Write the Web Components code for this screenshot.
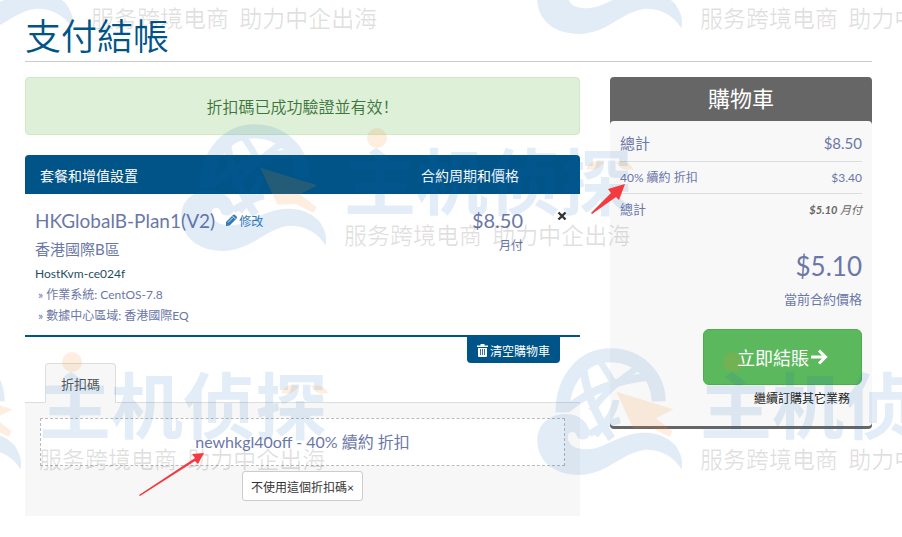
<!DOCTYPE html>
<html lang="zh-Hant">
<head>
<meta charset="utf-8">
<meta name="viewport" content="width=device-width, initial-scale=1">
<title>支付結帳</title>
<style>
  body {
    margin: 0;
    background: #fff;
    color: #6b77a8;
    font-family: "Lato", "Noto Sans CJK TC", sans-serif;
    font-size: 12px;
  }
</style>
</head>
<body>
<checkout-page>
  <page-title>支付結帳</page-title>
  <alert-box slot="main" lang="zh-Hans">折扣碼已成功驗證並有效！</alert-box>
  <cart-table slot="main"></cart-table>
  <discount-tabs slot="main" label="折扣碼">newhkgl40off - 40% 續約 折扣</discount-tabs>
  <order-summary slot="side"></order-summary>
</checkout-page>
<water-layer></water-layer>

<script>
class CheckoutPage extends HTMLElement {
  constructor() {
    super();
    this.attachShadow({ mode: 'open' });
  }

  connectedCallback() {
    this.shadowRoot.innerHTML = `
      <style>
        :host { display: block; padding: 14px 30px 20px 25px; }
        .cols {
          display: grid;
          grid-template-columns: minmax(0, 1fr) 262px;
          gap: 30px;
          align-items: start;
          margin-top: 15px;
        }
      </style>
      <slot></slot>
      <div class="cols">
        <main><slot name="main"></slot></main>
        <aside><slot name="side"></slot></aside>
      </div>
    `;
  }
}
customElements.define('checkout-page', CheckoutPage);

class PageTitle extends HTMLElement {
  constructor() {
    super();
    this.attachShadow({ mode: 'open' });
    this.shadowRoot.innerHTML = `
      <style>
        :host { display: block; border-bottom: 1px solid #ccc; }
        h1 {
          margin: 0;
          padding-bottom: 3px;
          font-size: 36px;
          font-weight: 350;
          line-height: 44px;
          color: #005487;
        }
      </style>
      <h1><slot></slot></h1>
    `;
  }
}
customElements.define('page-title', PageTitle);

class AlertBox extends HTMLElement {
  constructor() {
    super();
    this.attachShadow({ mode: 'open' });
    this.shadowRoot.innerHTML = `
      <style>
        :host {
          display: block;
          margin-bottom: 20px;
          padding: 16px;
          border: 1px solid #d0e9c6;
          border-radius: 4px;
          background: #dff0d8;
          color: #3c763d;
          font-family: "Noto Sans CJK SC", sans-serif;
          font-size: 16px;
          font-weight: 350;
          line-height: 24px;
          text-align: center;
        }
      </style>
      <div role="status"><slot></slot></div>
    `;
  }
}
customElements.define('alert-box', AlertBox);

class CartTable extends HTMLElement {
  constructor() {
    super();
    this.attachShadow({ mode: 'open' });
  }

  connectedCallback() {
    this.shadowRoot.innerHTML = `
      <style>
        :host { display: block; }
        table {
          width: 100%;
          table-layout: fixed;
          border-collapse: separate;
          border-spacing: 0;
          border-bottom: 2px solid #005487;
        }
        .price { width: 146px; }
        .remove { width: 37px; }
        th {
          padding: 0;
          height: 39px;
          background: #005487;
          color: #fff;
          font-size: 14px;
          font-weight: 400;
        }
        th:first-child { padding-left: 15px; text-align: left; border-top-left-radius: 4px; }
        th:last-child { border-top-right-radius: 4px; }
        td { padding: 12px 0 9px; vertical-align: top; }
        td:first-child { padding-left: 10px; }
        td.price { padding-right: 20px; box-sizing: border-box; text-align: right; }
        .name { display: flex; align-items: center; gap: 10px; height: 28px; font-size: 19px; }
        .amount { font-size: 20px; line-height: 28px; }
        .group { height: 30px; font-size: 15px; line-height: 30px; }
        .host { height: 20px; line-height: 20px; color: #1f4e5f; }
        ul { margin: 0; padding: 0 0 0 3px; list-style: none; line-height: 21px; }
        li { height: 21px; }
        .cycle { line-height: 24px; }
        a { display: flex; align-items: center; gap: 1px; color: #337ab7; font-size: 12px; text-decoration: none; }
        button { font: inherit; border: 0; cursor: pointer; }
        .x { display: block; margin: 4px auto 0; padding: 0; height: 12px; background: none; }
        .x svg { display: block; }
        .foot { display: flex; justify-content: flex-end; padding-right: 20px; }
        .clear {
          display: flex;
          align-items: center;
          gap: 2px;
          height: 26px;
          padding: 0 10px;
          border-radius: 0 0 4px 4px;
          background: #005487;
          color: #fff;
        }
      </style>
      <table>
        <thead>
          <tr>
            <th scope="col">套餐和增值設置</th>
            <th scope="col" class="price">合約周期和價格</th>
            <th class="remove"></th>
          </tr>
        </thead>
        <tbody>
          <tr>
            <td>
              <div class="name">
                <span>HKGlobalB-Plan1(V2)</span>
                <a href="#"><svg width="13" height="12" viewBox="0 0 13 12"><path fill="currentColor" d="M1 8l7-7q1-1 2 0l1.600 1.600q1 1 0 2l-7 6.800-3.600.6z"/><path d="M7.500 2l3 3M3 8.500l5-5" stroke="#fff" stroke-width=".8"/></svg>修改</a>
              </div>
              <div class="group">香港國際B區</div>
              <div class="host">HostKvm-ce024f</div>
              <ul>
                <li>» 作業系統: CentOS-7.8</li>
                <li>» 數據中心區域: 香港國際EQ</li>
              </ul>
            </td>
            <td class="price">
              <div class="amount">$8.50</div>
              <div class="cycle">月付</div>
            </td>
            <td>
              <button class="x" type="button" aria-label="×"><svg width="10" height="10" viewBox="0 0 10 10"><path d="M1.500 1.500l7 7m0-7l-7 7" stroke="#333" stroke-width="2.400"/></svg></button>
            </td>
          </tr>
        </tbody>
      </table>
      <div class="foot">
        <button class="clear" type="button">
          <svg width="11" height="13" viewBox="0 0 11 13"><path fill="#fff" fill-rule="evenodd" d="M3.500 0h4v1.500H11V3H0V1.500h3.500zM1 4h9v8q0 1-1 1H2q-1 0-1-1zM3 5v6h.8V5zm2.100 0v6h.8V5zm2.100 0v6H8V5z"/></svg>清空購物車
        </button>
      </div>
    `;
  }
}
customElements.define('cart-table', CartTable);

class DiscountTabs extends HTMLElement {
  constructor() {
    super();
    this.attachShadow({ mode: 'open' });
  }

  connectedCallback() {
    const label = this.getAttribute('label') || '';

    this.shadowRoot.innerHTML = `
      <style>
        :host { display: block; }
        .tabs { display: flex; padding-left: 20px; border-bottom: 1px solid #ddd; }
        button { font: inherit; cursor: pointer; }
        .tab {
          height: 40px;
          margin-bottom: -1px;
          padding: 0 15px;
          border: 1px solid #ddd;
          border-bottom-color: #f7f7f7;
          border-radius: 4px 4px 0 0;
          background: #f7f7f7;
          color: #555;
          font-size: 13px;
        }
        .panel {
          display: flex;
          flex-direction: column;
          align-items: center;
          gap: 5px;
          padding: 15px;
          background: #f7f7f7;
        }
        .code {
          box-sizing: border-box;
          width: 100%;
          border: 1px dashed #bbb;
          background: #fff;
          font-size: 16px;
          line-height: 46px;
          text-align: center;
        }
        .drop {
          height: 30px;
          padding: 0 8px;
          border: 1px solid #ccc;
          border-radius: 3px;
          background: #fff;
          color: #333;
        }
      </style>
      <div class="tabs" role="tablist">
        <button class="tab" type="button" role="tab" aria-selected="true">${label}</button>
      </div>
      <div class="panel" role="tabpanel">
        <div class="code"><slot></slot></div>
        <button class="drop" type="button">不使用這個折扣碼×</button>
      </div>
    `;
  }
}
customElements.define('discount-tabs', DiscountTabs);

class OrderSummary extends HTMLElement {
  constructor() {
    super();
    this.attachShadow({ mode: 'open' });
  }

  connectedCallback() {
    this.shadowRoot.innerHTML = `
      <style>
        :host {
          display: block;
          border-bottom: 3px solid #666;
          border-radius: 4px;
          background: #666;
        }
        h2 {
          margin: 0;
          color: #fff;
          font-size: 22px;
          font-weight: 400;
          line-height: 44px;
          text-align: center;
        }
        .body {
          display: flex;
          flex-direction: column;
          align-items: flex-end;
          padding: 4px 10px 13px;
          border-radius: 4px;
          background: #f8f8f8;
        }
        .row { display: flex; justify-content: space-between; align-self: stretch; font-size: 13px; line-height: 31px; }
        .first { font-size: 15px; line-height: 36px; }
        .off { font-size: 12px; }
        .line { border-bottom: 1px solid #ddd; }
        em { color: #666; font-size: 11px; }
        .total { margin-top: 20px; font-size: 26px; line-height: 42px; }
        .label { font-size: 13px; line-height: 24px; }
        button {
          display: flex;
          align-items: center;
          justify-content: center;
          gap: 2px;
          width: 159px;
          height: 56px;
          margin-top: 18px;
          border: 1px solid #4cae4c;
          border-radius: 6px;
          background: #5cb85c;
          color: #fff;
          font: inherit;
          font-size: 18px;
          cursor: pointer;
        }
        a { margin-right: 12px; color: #222; line-height: 28px; text-decoration: none; }
      </style>
      <h2>購物車</h2>
      <div class="body">
        <div class="row first line"><span>總計</span><span>$8.50</span></div>
        <div class="row off line"><span>40% 續約 折扣</span><span>$3.40</span></div>
        <div class="row"><span>總計</span><em><b>$5.10</b> 月付</em></div>
        <div class="total">$5.10</div>
        <div class="label">當前合約價格</div>
        <button type="button">立即結賬<svg width="17" height="16" viewBox="0 0 17 16"><path d="M0 8h14M8 1.500L14.500 8 8 14.500" fill="none" stroke="#fff" stroke-width="3"/></svg></button>
        <a href="#">繼續訂購其它業務</a>
      </div>
    `;
  }
}
customElements.define('order-summary', OrderSummary);

// one watermark: globe logo, brand name and slogan
class WaterMark extends HTMLElement {
  constructor() {
    super();
    this.attachShadow({ mode: 'open' });
    this.shadowRoot.innerHTML = `
      <style>
        :host {
          display: flex;
          gap: 18px;
          width: max-content;
          font-family: "Noto Sans CJK SC", sans-serif;
        }
        .logo { flex: none; }
        .brand { position: relative; padding-top: 14px; }
        .name { font-size: 72px; font-weight: 700; line-height: 80px; color: rgba(16, 105, 197, .12); }
        .slogan { font-size: 23px; line-height: 32px; color: rgba(0, 0, 0, .12); white-space: pre; }
        .spots { position: absolute; left: 0; top: 0; }
      </style>
      <svg class="logo" width="145" height="127" viewBox="21 24 435 381">
        <g opacity=".12" fill="none" stroke="#1069c5">
          <path stroke-width="42" d="M98 217C97 116 160 46 242 46C325 46 385 108 386 184"/>
          <path stroke-width="24" d="M158 74C168 160 200 232 245 296M112 206C170 158 250 122 352 110"/>
          <path stroke-width="20" d="M206 58C222 82 240 108 258 144M330 78C270 118 222 160 184 212M178 282C208 262 238 248 270 240M258 180C254 216 228 246 196 286"/>
          <path fill="#1069c5" stroke="none" d="M22 300C22 248 66 222 105 222C145 220 176 246 180 282C174 302 150 302 142 292C138 276 128 272 116 280C108 298 120 318 140 324C196 338 226 310 280 290C340 268 400 276 436 316C456 344 460 370 454 388C430 346 384 326 340 330C270 342 236 400 150 405C70 405 22 362 22 300Z"/>
        </g>
        <path fill="#f08c28" fill-opacity=".15" d="M259 155L430 208L378 235L428 274L418 290L366 264L310 266Z"/>
      </svg>
      <div class="brand">
        <div class="name">主机侦探</div>
        <div class="slogan">服务跨境电商  助力中企出海</div>
        <svg class="spots" width="290" height="60"><g fill="#f08c28" fill-opacity=".15"><circle cx="33" cy="14" r="10"/><path d="M242 45q5-11 18-7-6 10-18 7zM272 38q12-3 17 7-12 3-17-7z"/></g></svg>
      </div>
    `;
  }
}
customElements.define('water-mark', WaterMark);

// everything that floats above the page: watermarks and the two red pointers
class WaterLayer extends HTMLElement {
  constructor() {
    super();
    this.attachShadow({ mode: 'open' });
  }

  connectedCallback() {
    const marks = [[-72, -93], [537, -93], [181, 124], [-124, 348], [537, 348]];

    this.shadowRoot.innerHTML = `
      <style>
        :host { position: absolute; inset: 0; overflow: hidden; pointer-events: none; }
        water-mark, .arrow { position: absolute; }
      </style>
      ${marks.map(([x, y]) => `<water-mark style="left:${x}px;top:${y}px"></water-mark>`).join('')}
      <svg class="arrow" style="left:591px;top:183px" width="35" height="31" viewBox="0 0 35 31"><path fill="#f33a3f" d="M0 30L20 10 17 6 34 1 28 17 25 14 1 31z"/></svg>
      <svg class="arrow" style="left:139px;top:452px" width="66" height="45" viewBox="0 0 66 45"><path fill="#f33a3f" d="M0 43L56 6 53 2 65 1 59 12 56 9 1 44z"/></svg>
    `;
  }
}
customElements.define('water-layer', WaterLayer);
</script>
</body>
</html>
